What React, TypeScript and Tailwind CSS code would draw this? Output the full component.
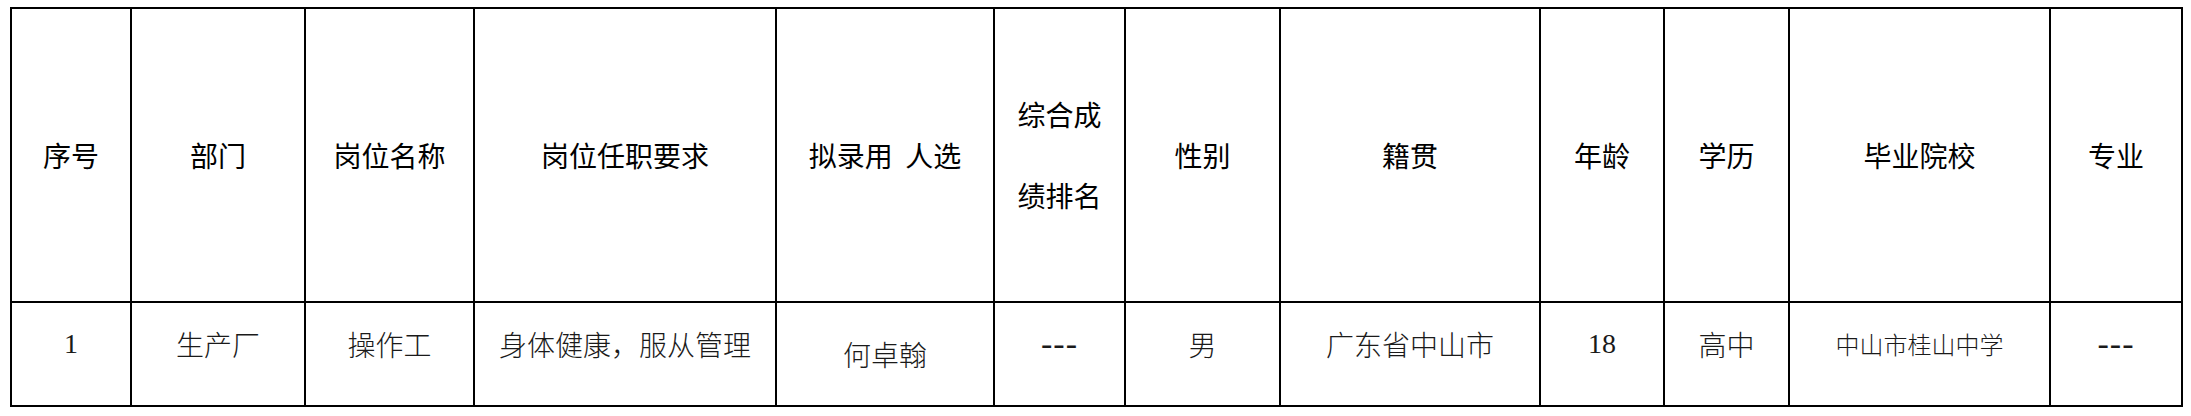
import React from 'react';

const widths = [120, 174, 169, 302, 218, 131, 155, 260, 124, 125, 261, 132];

const cjk = "font-['Noto_Sans_CJK_SC','Noto_Sans',sans-serif]";
const serif = "font-['Liberation_Serif','Noto_Sans_CJK_SC',serif]";

const App: React.FC = () => {
  return (
    <div className="bg-white w-[2191px] h-[416px] pt-[7px] pl-[10px]">
      <table className={`table-fixed border-collapse w-[2172px] text-black ${cjk}`}>
        <colgroup>
          {widths.map((w, i) => (
            <col key={i} style={{ width: w }} />
          ))}
        </colgroup>
        <tbody>
          {/* Header row */}
          <tr className="h-[294px] text-[28px] leading-none text-center">
            <td className="border-2 border-black align-middle">序号</td>
            <td className="border-2 border-black align-middle">部门</td>
            <td className="border-2 border-black align-middle">岗位名称</td>
            <td className="border-2 border-black align-middle">岗位任职要求</td>
            <td className="border-2 border-black align-middle [word-spacing:6px]">拟录用 人选</td>
            <td className="border-2 border-black align-middle leading-[81px]">
              综合成
              <br />
              绩排名
            </td>
            <td className="border-2 border-black align-middle">性别</td>
            <td className="border-2 border-black align-middle">籍贯</td>
            <td className="border-2 border-black align-middle">年龄</td>
            <td className="border-2 border-black align-middle">学历</td>
            <td className="border-2 border-black align-middle">毕业院校</td>
            <td className="border-2 border-black align-middle">专业</td>
          </tr>

          {/* Data row */}
          <tr className="h-[104px] text-[28px] leading-none text-center text-[#1a1a1a] font-light">
            <td className={`border-2 border-black align-middle pb-[20px] ${serif} font-normal`}>1</td>
            <td className="border-2 border-black align-middle pb-[20px]">生产厂</td>
            <td className="border-2 border-black align-middle pb-[20px]">操作工</td>
            <td className="border-2 border-black align-middle pb-[20px] whitespace-nowrap">身体健康，服从管理</td>
            <td className="border-2 border-black align-middle">何卓翰</td>
            <td className={`border-2 border-black align-middle pb-[20px] ${serif} font-normal text-[34px] tracking-[1px]`}>---</td>
            <td className="border-2 border-black align-middle pb-[20px]">男</td>
            <td className="border-2 border-black align-middle pb-[20px]">广东省中山市</td>
            <td className={`border-2 border-black align-middle pb-[20px] ${serif} font-normal`}>18</td>
            <td className="border-2 border-black align-middle pb-[20px]">高中</td>
            <td className="border-2 border-black align-middle pb-[20px] text-[24px]">中山市桂山中学</td>
            <td className={`border-2 border-black align-middle pb-[20px] ${serif} font-normal text-[34px] tracking-[1px]`}>---</td>
          </tr>
        </tbody>
      </table>
    </div>
  );
};

export default App;
